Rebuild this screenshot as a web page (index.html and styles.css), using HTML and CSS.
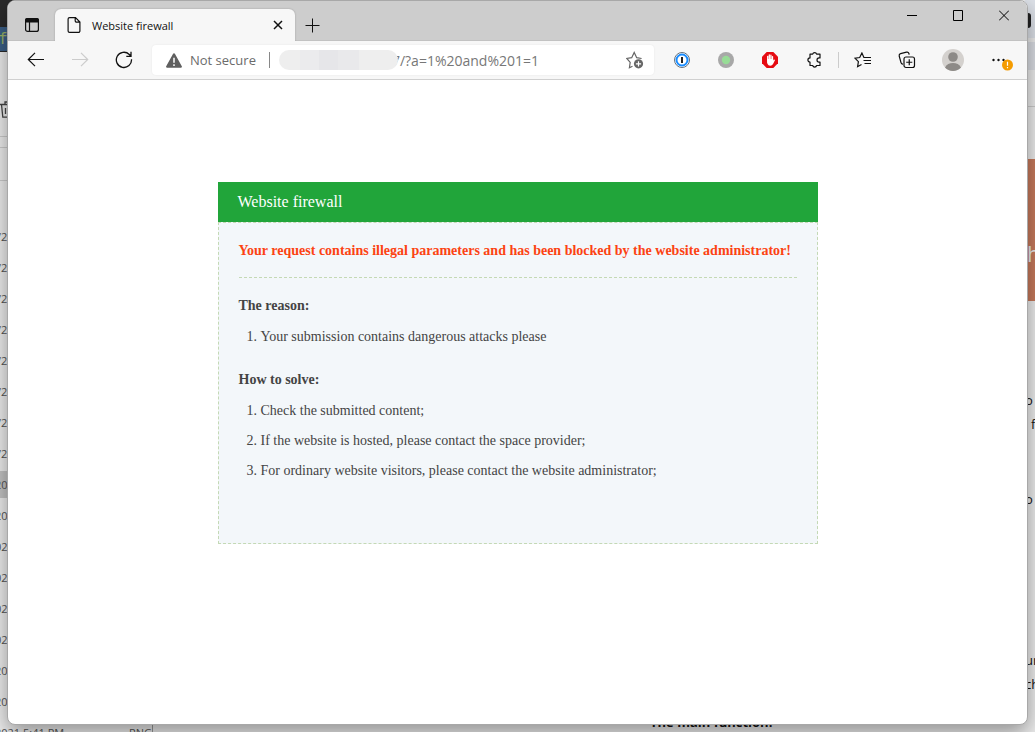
FILE: index.html
```html
<!DOCTYPE html>
<html lang="en">
<head>
<meta charset="utf-8">
<title>Website firewall</title>
<link rel="stylesheet" href="styles.css">
</head>
<body>
<div class="desktop">
  <div class="explorer" aria-hidden="true">
    <div class="editor"><span class="editor-code">f</span></div>
    <div class="explorer-tools">
      <svg width="16" height="18" viewBox="0 0 16 18" fill="none" stroke="#444" stroke-width="1.3"><path d="M0 3.500h16M1.500 3.500l1.300 12.700h9.400L14 3.500M5 3V1h4v2M5.500 7v6M9.500 7v6"/></svg>
    </div>
    <div class="explorer-path"></div>
    <div class="explorer-head"></div>
    <ul class="rows">
      <li>/2</li><li>/2</li><li>/2</li><li>/2</li><li>/2</li><li>/2</li><li>/2</li><li>/2</li>
      <li class="selected wide">20</li><li class="wide">20</li><li class="mid">02</li><li class="mid">02</li><li class="mid">02</li><li class="mid">02</li><li class="wide">20</li><li class="wide">20</li>
      <li class="last"><span>2021 5:41 PM</span><span>PNG</span></li>
    </ul>
  </div>
  <div class="document" aria-hidden="true">
    <div class="doc-side">
      <div class="doc-top"><span class="doc-mark"></span></div>
      <div class="doc-bar"></div>
      <div class="doc-rule"></div>
      <div class="doc-banner">h</div>
      <div class="doc-text">
        <span>o</span><span class="indent">f</span><span class="gap-m">o</span><span class="gap-l">ur</span><span>ch</span>
      </div>
    </div>
    <div class="doc-heading">The main function:</div>
  </div>

  <div class="window">
    <header class="titlebar">
      <button class="tab-menu" aria-label="Tab actions">
        <svg width="14" height="14" viewBox="0 0 14 14"><rect x=".6" y=".6" width="12.800" height="12.800" rx="2" fill="none" stroke="#111" stroke-width="1.200"/><path d="M0 4.500V2a2 2 0 0 1 2-2h10a2 2 0 0 1 2 2v2.500z" fill="#111"/><path d="M4.500 4v9" stroke="#111" stroke-width="1.200"/></svg>
      </button>
      <div class="tab">
        <svg width="14" height="16" viewBox="0 0 14 16" fill="none" stroke="#111" stroke-width="1.200"><path d="M3 .6h5.500L12.900 5v8.900a1.500 1.500 0 0 1-1.500 1.500H2.600a1.500 1.500 0 0 1-1.500-1.500V2.100A1.500 1.500 0 0 1 2.600.6zM8.200.8v3a1.400 1.400 0 0 0 1.400 1.400h3"/></svg>
        <span class="tab-title">Website firewall</span>
        <button class="tab-close" aria-label="Close tab"><svg width="10" height="10" viewBox="0 0 10 10" stroke="#111" stroke-width="1.500"><path d="M1 1l8 8M9 1L1 9"/></svg></button>
      </div>
      <button class="new-tab" aria-label="New tab"><svg width="15" height="15" viewBox="0 0 15 15" stroke="#111"><path d="M7.500 .5v14M.5 7.500h14"/></svg></button>
      <div class="controls">
        <button aria-label="Minimize"><svg width="10" height="11" viewBox="0 0 10 11" stroke="#000"><path d="M0 5.500h10"/></svg></button>
        <button aria-label="Maximize"><svg width="10" height="11" viewBox="0 0 10 11" stroke="#000" fill="none"><path d="M.5.5h9v10h-9z"/></svg></button>
        <button aria-label="Close"><svg width="10" height="11" viewBox="0 0 10 11" stroke="#000"><path d="M0 .5l10 10M10 .5l-10 10"/></svg></button>
      </div>
    </header>

    <nav class="toolbar">
      <button aria-label="Back"><svg width="18" height="16" viewBox="0 0 18 16" fill="none" stroke="#111" stroke-width="1.200"><path d="M17 7.500H1.500M8 .8L1.300 7.500l6.700 6.700"/></svg></button>
      <button aria-label="Forward" disabled><svg width="18" height="16" viewBox="0 0 18 16" fill="none" stroke="#ccc" stroke-width="1.200"><path d="M1 7.500h15.500M10 .8l6.700 6.700-6.700 6.700"/></svg></button>
      <button aria-label="Refresh"><svg width="18" height="18" viewBox="0 0 18 18" fill="none" stroke="#111" stroke-width="1.300"><path d="M16.500 8.200A7.600 7.600 0 1 1 14.300 3.500L15.800 5M16 .8V5.300H11.300"/></svg></button>
      <div class="address">
        <svg class="warn" width="16" height="15" viewBox="0 0 16 15"><path d="M7.100.7a1 1 0 0 1 1.800 0l6.900 12.600a1 1 0 0 1-.9 1.500H1.100a1 1 0 0 1-.9-1.500z" fill="#5f5f5f"/><path d="M8 4.800v5M8 11.200v1.700" stroke="#fff" stroke-width="1.500"/></svg>
        <label class="secure" for="url">Not secure</label>
        <span class="divider"></span>
        <span class="redacted"></span>
        <input id="url" class="url" type="text" value="7/?a=1%20and%201=1" spellcheck="false">
        <button class="favorite" aria-label="Add to favorites"><svg width="18" height="18" viewBox="0 0 18 18"><path d="M6.500 15.200l-3.100 1.500.8-5.300L.8 7.500l4.900-.8L8.200 1.500l2.500 5.200 4.900.8" fill="none" stroke="#666" stroke-width="1.200"/><circle cx="12.500" cy="12.800" r="4.600" fill="#666"/><path d="M12.500 10.200v5.200M9.900 12.800h5.200" stroke="#fff" stroke-width="1.200"/></svg></button>
      </div>
      <button aria-label="Password manager"><svg width="16" height="16" viewBox="0 0 16 16"><circle cx="8" cy="8" r="7.500" fill="#fff" stroke="#66717c"/><circle cx="8" cy="8" r="5.500" fill="#fff" stroke="#198cff" stroke-width="2"/><path d="M8 5v6" stroke="#222" stroke-width="2"/></svg></button>
      <button aria-label="Status extension"><svg width="16" height="16" viewBox="0 0 16 16"><circle cx="8" cy="8" r="8" fill="#a8a8a8"/><circle cx="8" cy="8" r="4.200" fill="#97dc96"/></svg></button>
      <button aria-label="Ad blocker"><svg width="16" height="16" viewBox="0 0 16 16"><path d="M4.700 0h6.600L16 4.700v6.600L11.300 16H4.700L0 11.300V4.700z" fill="#e60b12"/><path d="M5.700 8V4.300M7.300 8V3M8.900 8V3.200M10.500 8V4.600" stroke="#fff" stroke-width="1.300" stroke-linecap="round"/><path d="M5.050 7h6.100v1.600l1-1.200.9.500-2 4.200q-.9 1.600-2.800 1.600-2 0-2.700-1.700l-.5-1.500z" fill="#fff"/></svg></button>
      <button aria-label="Extensions"><svg width="16" height="16" viewBox="0 0 16 16" fill="none" stroke="#111" stroke-width="1.200" stroke-linejoin="round"><path d="M4 2.200h2.700a2 2 0 0 1 3.900 0h3.400v3.700h-.9a2.100 2.100 0 0 0 0 4.200h.9v3.400h-3.400a2 2 0 0 1-3.900 0H4V10.100a2.100 2.100 0 1 1 0-4.200z"/></svg></button>
      <span class="separator"></span>
      <button aria-label="Favorites"><svg width="18" height="16" viewBox="0 0 18 16" fill="none" stroke="#111" stroke-width="1.200"><path d="M9.500 5.500H9.900L7.900 1 5.700 5.500 1 6.200l3.400 3.400-.8 5.100L7.500 12.500M10 5.500h7M9.500 8.500h7.500M10.500 11.500h6.500"/></svg></button>
      <button aria-label="Collections"><svg width="18" height="18" viewBox="0 0 18 18" fill="none" stroke="#111" stroke-width="1.200"><path d="M5 13.200a2 2 0 0 1-2-1.500L1.200 5A2 2 0 0 1 2.600 2.700L8.500 1.200a2 2 0 0 1 2.400 1.300l.3 1.200"/><rect x="6" y="6" width="10.500" height="10.500" rx="2"/><path d="M11.250 8.200v6.100M8.200 11.250h6.100"/></svg></button>
      <button class="profile" aria-label="Profile"><svg width="22" height="22" viewBox="0 0 22 22"><circle cx="11" cy="11" r="11" fill="#d4d1ce"/><circle cx="11" cy="8" r="4.800" fill="#8d8a87"/><path d="M3 18.500c1.500-3.200 4.500-4.500 8-4.500s6.500 1.300 8 4.500A11 11 0 0 1 3 18.500z" fill="#8d8a87"/></svg></button>
      <button class="more" aria-label="Settings and more"><svg width="22" height="22" viewBox="0 0 22 22"><g fill="#111"><circle cx="2.500" cy="11" r="1.200"/><circle cx="7.500" cy="11" r="1.200"/><circle cx="12.500" cy="11" r="1.200"/></g><circle cx="16.500" cy="16" r="5.500" fill="#f49b00"/><path d="M16.500 12.800v4M16.500 18v1.300" stroke="#fff" stroke-width="1.200"/></svg></button>
    </nav>

    <main class="page">
      <section class="card">
        <h1 class="card-title">Website firewall</h1>
        <div class="card-body">
          <p class="alert">Your request contains illegal parameters and has been blocked by the website administrator!</p>
          <h2 class="topic">The reason:</h2>
          <ol class="list">
            <li>Your submission contains dangerous attacks please</li>
          </ol>
          <h2 class="topic">How to solve:</h2>
          <ol class="list">
            <li>Check the submitted content;</li>
            <li>If the website is hosted, please contact the space provider;</li>
            <li>For ordinary website visitors, please contact the website administrator;</li>
          </ol>
        </div>
      </section>
    </main>
  </div>
</div>
</body>
</html>
```

FILE: styles.css
```css
* { box-sizing: border-box; }
body { margin: 0; font-family: "Open Sans", "Noto Sans", sans-serif; }
button { display: flex; align-items: center; justify-content: center; padding: 0; border: 0; background: none; }
svg { display: block; flex: none; }
ul, ol, h1, h2, p { margin: 0; padding: 0; }

.desktop {
  position: relative;
  display: flex;
  min-height: 100vh;
  padding: 0 7px 7px;
  overflow: hidden;
  background: #eee;
}

/* Windows behind the browser */
.explorer {
  position: absolute;
  inset: 0 auto 0 0;
  width: 153px;
  overflow: hidden;
  border-right: 1px solid #999;
  background: #eee;
  font: 11px/31px "Open Sans", sans-serif;
  color: #555;
}
.editor { height: 52px; padding-top: 27px; background: #2b2b2b; }
.editor-code { display: block; height: 24px; background: #3b5f87; color: #9ab36a; font: 16px/24px "DejaVu Sans Mono", monospace; text-indent: -2px; }
.explorer-tools { display: flex; align-items: flex-end; height: 85px; padding-bottom: 17px; border-bottom: 1px solid #ccc; }
.explorer-path { height: 11px; border-bottom: 1px solid #ccc; }
.explorer-head { height: 33px; border-bottom: 1px solid #ccc; }
.rows { padding-top: 40px; list-style: none; }
.rows li { height: 31px; text-indent: -3px; white-space: nowrap; }
.rows .wide { text-indent: -5px; }
.rows .mid { text-indent: -5px; }
.rows .selected { padding: 2px 0; background: #c4c4c4; background-clip: content-box; line-height: 27px; }
.rows .last { display: flex; justify-content: space-between; text-indent: -5px; }

.document { position: absolute; inset: 0 0 0 153px; overflow: hidden; background: #eee; color: #111; }
.doc-side { display: flex; flex-direction: column; width: 10px; margin-left: auto; }
.doc-top { height: 38px; padding: 13px 0 0 2px; background: #dfe3ea; }
.doc-mark { display: block; width: 4px; height: 15px; border-radius: 0 3px 3px 0; background: #222; }
.doc-bar { height: 28px; margin-top: 4px; background: #dcdfe5; }
.doc-rule { height: 37px; border-bottom: 1px solid #ccc; }
.doc-banner { height: 142px; margin-top: 52px; padding-left: 2px; background: #c97b5d; color: #eee; font-size: 22px; line-height: 188px; }
.doc-text { display: flex; flex-direction: column; padding-top: 87px; font-size: 13px; line-height: 24px; }
.doc-text .indent { padding-left: 6px; }
.doc-text .gap-m { margin-top: 51px; }
.doc-text .gap-l { margin-top: 137px; }
.doc-heading { position: absolute; bottom: 0; left: 497px; font-size: 13px; font-weight: 700; line-height: 20px; }

/* Browser window */
.window {
  position: relative;
  display: flex;
  flex: 1;
  flex-direction: column;
  min-width: 0;
  overflow: hidden;
  border: 1px solid #a8a8a8;
  border-radius: 8px;
  background: #fff;
  box-shadow: 0 8px 22px rgba(0, 0, 0, .4);
}
.titlebar { display: flex; height: 40px; background: #cdcdcd; box-shadow: inset 0 -1px #c2c2c2; }
.tab-menu { width: 47px; padding-top: 8px; }
.tab {
  display: flex;
  align-items: center;
  width: 240px;
  margin-top: 8px;
  padding: 0 11px 0 12px;
  border-radius: 6px 6px 0 0;
  background: #f7f7f7;
  box-shadow: 0 0 2px rgba(0, 0, 0, .25);
}
.tab-title { flex: 1; margin-left: 11px; font-size: 11px; color: #111; }
.tab-close { width: 12px; height: 20px; }
.new-tab { width: 35px; padding-top: 8px; }
.controls { display: flex; height: 29px; margin-left: auto; }
.controls button { width: 46px; }

.toolbar { position: relative; display: flex; align-items: center; height: 39px; padding-left: 6px; border-bottom: 1px solid #d0d0d0; background: #f7f7f7; }
.toolbar > button { width: 44px; height: 38px; flex: none; }
.toolbar > .profile { width: 48px; }
.toolbar > .more { width: 50px; }
.separator { width: 1px; height: 16px; margin: 0 2px; background: #ccc; }
.address {
  display: flex;
  flex: 1;
  align-items: center;
  min-width: 0;
  height: 30px;
  margin: 0 6px;
  padding: 0 9px 0 14px;
  border-radius: 4px;
  background: #fff;
  box-shadow: 0 0 2px rgba(0, 0, 0, .08);
}
.secure { margin-left: 8px; font-size: 13px; color: #6b6b6b; white-space: nowrap; }
.divider { width: 1px; height: 16px; margin: 0 9px 0 13px; background: #888; }
.redacted {
  position: relative;
  flex: none;
  width: 119px;
  height: 20px;
  margin-right: -6px;
  border-radius: 10px;
  background: linear-gradient(90deg, #eee 0 18%, #ebebed 18% 34%, #e6e6e9 34% 50%, #e9e9eb 50% 67%, #eee 67%);
}
.url { flex: 1; min-width: 0; padding: 0; border: 0; outline: 0; background: none; font: 14px "Open Sans", sans-serif; color: #777; }
.favorite { width: 20px; height: 28px; }

/* Blocked page */
.page { flex: 1; padding: 102px 20px 20px; font-family: "Liberation Serif", serif; color: #444; }
.card { max-width: 600px; margin: 0 auto; }
.card-title { padding: 0 20px; background: #21a53a; color: #fff; font-size: 16px; font-weight: 400; line-height: 40px; }
.card-body { padding: 13px 20px 57px; border: 1px dashed #c4d9b5; background: #f3f7fa; font-size: 14px; line-height: 30px; }
.alert { margin-bottom: 12px; padding-bottom: 11px; border-bottom: 1px dashed #c4d9b5; color: #fc4312; font-weight: 700; }
.topic { font-size: 14px; font-weight: 700; line-height: 32px; }
.list { padding-left: 22px; }
.list + .topic { margin-top: 12px; }
```
